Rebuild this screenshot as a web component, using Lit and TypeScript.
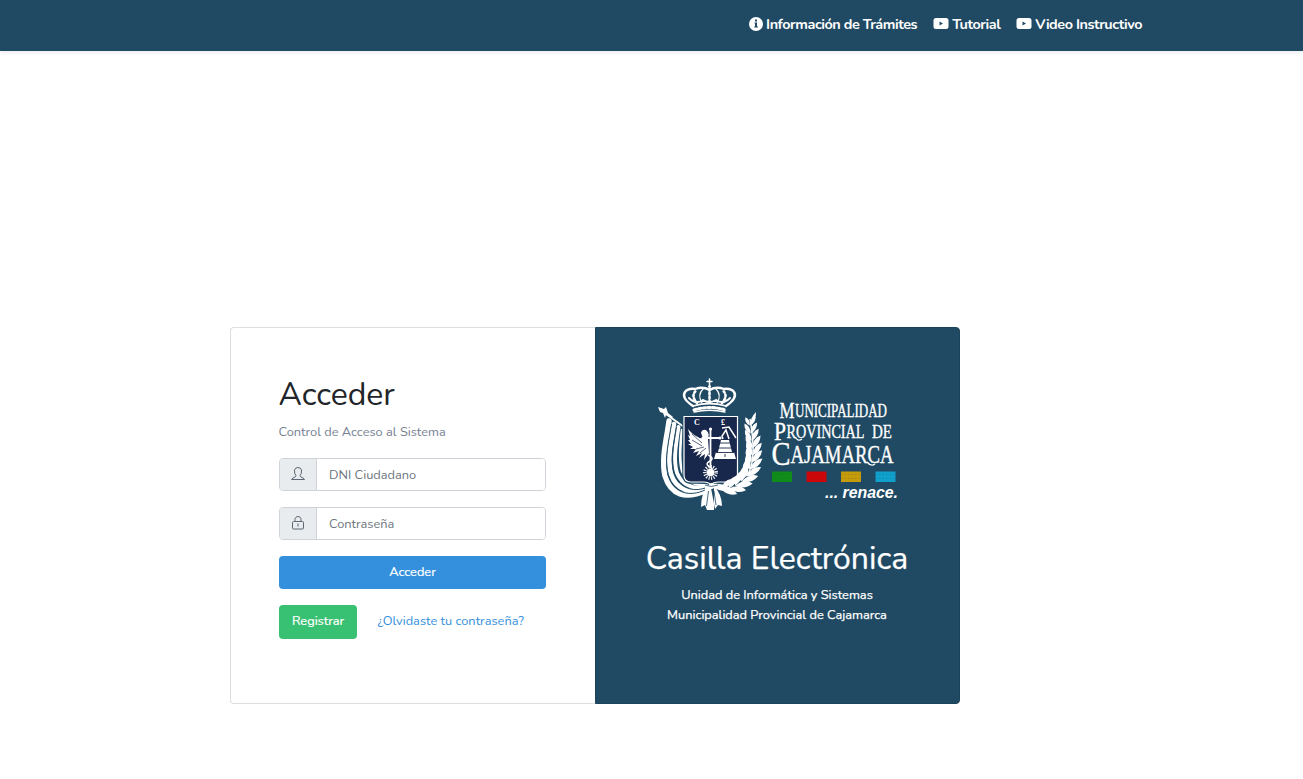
import { LitElement, html, css, svg } from "lit";
import { customElement } from "lit/decorators.js";

// stem position, rotation and size of each pair of laurel leaves
const leaves = [
  [93, 44, 3, 0.9], [93.5, 51, 0, 1.1], [94.5, 58, 0, 1.2], [95.5, 65, 2, 1.3], [96, 72, 5, 1.35],
  [95.5, 79, 10, 1.4], [94.5, 86, 18, 1.45], [92, 93, 28, 1.5], [88.5, 99, 40, 1.5], [83, 104, 52, 1.5],
  [77, 108, 64, 1.5], [70, 110, 76, 1.4],
];

@customElement("city-seal")
export class CitySeal extends LitElement {
  static styles = css`
    :host { display: block; width: 242px; height: 134px; }
    svg { display: block; overflow: visible; }
  `;
  render() {
    return html`<svg width="242" height="134" viewBox="0 0 242 134" role="img" aria-label="Municipalidad Provincial de Cajamarca">
      <g fill="none" stroke="#fff" stroke-linecap="round">
        <path d="M52.500 1v8M50 3.500h5" stroke-width="1.500"/>
        <circle cx="52.500" cy="8.500" r="1.500" fill="#fff" stroke="none"/>
        <path d="M36 28Q24 20 28 14Q31 10 38 11Q46 8 52.500 12Q59 8 67 11Q74 10 77 14Q81 20 69 28" stroke-width="2.400"/>
        <path d="M40 25Q33 17 40 12M65 25Q72 17 65 12M52.500 11v14" stroke-width="2.600" stroke-dasharray="1.600 2.200"/>
        <path d="M45 25Q40 17 46 11M60 25Q65 17 59 11" stroke-width="1.200"/>
        <path d="M32 20Q39 27 46 22Q52 26 59 22Q66 27 73 20" stroke-width="2"/>
        <path d="M36 28Q52.500 23 69 28" stroke-width="1.800"/>
        <path d="M37 32Q52.500 27 68 32" stroke-width="3" stroke-dasharray="2.500 2.200"/>
        <path d="M37 34Q52.500 30.500 68 34" stroke-width="1.300"/>
      </g>
      <path d="M1 29l6 2 2-2 2 6 5 4-1 1-6-3-1 3-2-5-3-1z" fill="#fff"/>
      <path d="M9 36L27 49" stroke="#fff" stroke-width="1.800"/>
      <g fill="none" stroke="#fff" stroke-linecap="round">
        <path d="M12 43C10 60 4 80 8 98C14 117 28 122 50 112" stroke-width="5.400"/>
        <path d="M17 46C14 65 10 80 14 96C19 112 34 117 50 110" stroke-width="4.600"/>
        <path d="M21.500 49C19 66 16 82 20 95C25 107 36 112 50 108.500" stroke-width="3.900"/>
        <path d="M25 52C23 68 22 83 25 93C29 103 38 108 50 107" stroke-width="2.600"/>
      </g>
      <path d="M14.500 46C12 63 7 80 11 97C17 116 33 119 48 112M19.500 49C17 66 13 80 17 95C23 111 36 114 48 110" fill="none" stroke="#204a64" stroke-width="1"/>
      <path d="M27 38.500H80.500V97Q80.500 104 73.500 104H62Q56 104 54 107Q52 104 46 104H34Q27 104 27 97z" fill="#18274c" stroke="#204a64" stroke-width="3.500"/>
      <path d="M27 38.500H80.500V97Q80.500 104 73.500 104H62Q56 104 54 107Q52 104 46 104H34Q27 104 27 97z" fill="#18274c" stroke="#fff" stroke-width="1.200"/>
      <g fill="#fff" stroke="#fff">
        <path d="M51 61Q53 55 49 52Q45 51 44 55L46 60Q43 61 41 59Q36 57 31 51L33 58 31 57 33 62 31 62 34 66 31 66 36 69 33 71 39 71 36 75 42 73 39 78 45 75 42 80 48 76 47 82 52 75z" stroke="none"/>
        <path d="M35 56L45 65M35 62L45 68M39 71L47 69M43 75L49 70" stroke="#18274c" stroke-width=".7"/>
        <path d="M53.500 51V90M46 60H63" fill="none" stroke-width="1.800"/>
        <circle cx="53.500" cy="51" r="1.600" stroke="none"/><circle cx="46" cy="60" r="1.600" stroke="none"/><circle cx="63" cy="60" r="1.600" stroke="none"/>
        <path d="M51 77Q58 80 53 83Q47 86 53 89Q57 91 52 93" fill="none" stroke-width="1.500"/>
        <path d="M64 62H72L75 74H77L79 81H57L59 74H61z" stroke="none"/>
        <path d="M63 65h10M61 70h13M59 74.500h18M68 76v3" stroke="#18274c" stroke-width=".9"/>
        <path d="M66 61L65 58 69 52 72 61M65 50L72 49 79 60" fill="none" stroke-width="1.500"/>
        <circle cx="53.500" cy="94.500" r="3.800" stroke="none"/>
        <circle cx="53.500" cy="94.500" r="5.600" fill="none" stroke-width="3.600" stroke-dasharray="1 1.350"/>
      </g>
      <path d="M93 41C96 58 99 80 92 94Q80 109 55 108" fill="none" stroke="#fff" stroke-width="1.500"/>
      <g fill="#fff">
        ${leaves.map(([x, y, a, s]) => svg`<g transform=${`translate(${x} ${y}) rotate(${a}) scale(${s})`}>
          <path d="M0 4Q-6 2-5.500-5Q0-3 0 4z"/><path d="M0 4Q6 1 6-6Q0-4 0 4z"/></g>`)}
        <path d="M95 46Q92 41 99 34Q99 42 95 46z"/>
        <path d="M54 106Q68 104 77 113Q63 115 54 108z"/>
        <path d="M52 107Q44 114 44 129L48 127 50 132 54 111zM54 109L50 132 57 132 57 110zM56 107Q65 116 65 128L61 127 58 131 54 110z"/>
        <circle cx="54.500" cy="108" r="3"/>
      </g>
      <path d="M51.500 113l-2 15M57 113l2 14M48 107Q54 110 61 107" stroke="#204a64" stroke-width=".8" fill="none"/>
      <g font-family="Liberation Serif, serif" fill="#fff" font-weight="bold" font-size="8"><text x="37" y="47">C</text><text x="64" y="47">£</text></g>
      <g font-family="Liberation Serif, serif" fill="#fff" stroke="#fff" stroke-width=".35">
        <text x="122.500" y="40" font-size="23" textLength="15" lengthAdjust="spacingAndGlyphs">M</text>
        <text x="138" y="38.500" font-size="18.500" textLength="92" lengthAdjust="spacingAndGlyphs">UNICIPALIDAD</text>
        <text x="117" y="62" font-size="25" textLength="12" lengthAdjust="spacingAndGlyphs">P</text>
        <text x="129.500" y="59.500" font-size="19.500" textLength="78" lengthAdjust="spacingAndGlyphs">ROVINCIAL</text>
        <text x="215" y="59.500" font-size="19.500" textLength="20" lengthAdjust="spacingAndGlyphs">DE</text>
        <text x="114.500" y="87" font-size="33" textLength="19" lengthAdjust="spacingAndGlyphs">C</text>
        <text x="133.500" y="84.500" font-size="24.500" textLength="103" lengthAdjust="spacingAndGlyphs">AJAMARCA</text>
      </g>
      <path d="M138 59q3 5 7 2M210 84q4 5 8 2" fill="none" stroke="#fff" stroke-width="1.300"/>
      <path d="M115 93.500h20v10.500h-20z" fill="#108c18"/><path d="M149.500 93.500h20v10.500h-20z" fill="#d00508"/><path d="M184 93.500h20v10.500h-20z" fill="#c69b0a"/><path d="M218.500 93.500h20v10.500h-20z" fill="#10a0cc"/>
      <path d="M115 96.500h20m14.500 0h20m14.500 0h20m14.500 0h20M115 100.500h20m14.500 0h20m14.500 0h20m14.500 0h20" stroke="#204a64" stroke-opacity=".3" stroke-width=".8" stroke-dasharray="1.500 2"/>
      <text x="168" y="119.500" fill="#fff" font-family="Liberation Sans, sans-serif" font-style="italic" font-weight="bold" font-size="16" textLength="73" lengthAdjust="spacingAndGlyphs">... renace.</text>
    </svg>`;
  }
}

@customElement("app-root")
export class AppRoot extends LitElement {
  static styles = css`
    :host { display: block; height: 779px; background: #fff; overflow: hidden; font: 12.8px/20px Nunito, "Open Sans", sans-serif; color: #212529; }
    * { box-sizing: border-box; }
    nav { height: 51px; background: #204a64; box-shadow: 0 2px 4px rgba(0,0,0,.08); display: flex; justify-content: flex-end; gap: 16px; padding: 14px 161px 0 0; }
    nav a { display: flex; gap: 3px; color: #fff; font-size: 14.4px; font-weight: 700; letter-spacing: -.44px; white-space: nowrap; }
    nav svg { margin-top: 3px; }
    .card { margin: 276px 0 0 230px; width: 730px; height: 377px; display: flex; }
    .login { width: 365px; padding: 48px 49px 0 48px; border: 1px solid #dcdfe2; border-right: 0; border-radius: 4px 0 0 4px; }
    .brand { width: 365px; padding: 50px 1px 0 0; background: #204a64; color: #fff; border-radius: 0 4px 4px 0; display: flex; flex-direction: column; align-items: center; border: 1px solid #1d435b; }
    city-seal { margin-left: 2px; }
    h1, h2, p { margin: 0; font-weight: 400; white-space: nowrap; }
    h1 { font-size: 32px; line-height: 38px; margin-left: -.5px; }
    .sub { margin-top: 8px; color: #768192; margin-left: -.5px; }
    .field { display: flex; height: 33px; margin-top: 16px; border: 1px solid #ced4da; border-radius: 4px; overflow: hidden; }
    .icon { width: 37px; background: #e9ecef; border-right: 1px solid #ced4da; display: flex; justify-content: center; padding-top: 8px; }
    .field input { flex: 1; min-width: 0; border: 0; padding: 0 12px; font: inherit; background: #fff; }
    .field input::placeholder { color: #6c757d; opacity: 1; }
    button { font: inherit; color: #fff; border: 0; border-radius: 4px; padding: 0 0 2px; }
    .enter { display: block; width: 267px; height: 33px; margin-top: 16px; background: #3490dc; -webkit-text-stroke: .2px #fff; }
    .row { display: flex; margin-top: 16px; gap: 20.500px; }
    .register { width: 78px; height: 34px; background: #38c172; -webkit-text-stroke: .2px #fff; }
    .forgot { color: #3490dc; padding-top: 6px; white-space: nowrap; }
    h2 { font-size: 32px; line-height: 38px; margin-top: 28px; -webkit-text-stroke: .25px #fff; }
    .info { margin-top: 7px; text-align: center; -webkit-text-stroke: .25px #fff; }
  `;
  render() {
    const video = html`<svg width="16" height="13" viewBox="0 0 16 13"><rect x=".5" y="1" width="15" height="11" rx="2.500" fill="#fff"/><path d="M6.500 4.500v4l3.500-2z" fill="#204a64"/></svg>`;
    return html`
      <nav>
        <a><svg width="14" height="14" viewBox="0 0 14 14"><circle cx="7" cy="7" r="7" fill="#fff"/><path d="M6 2.500h2v2H6zM5.500 5.500H8v4h1v1H5.200v-1H6v-3h-.5z" fill="#204a64"/></svg><span>Información de Trámites</span></a>
        <a>${video}<span>Tutorial</span></a>
        <a>${video}<span>Video Instructivo</span></a>
      </nav>
      <main class="card">
        <section class="login">
          <h1>Acceder</h1>
          <p class="sub">Control de Acceso al Sistema</p>
          <div class="field"><span class="icon"><svg width="14" height="14" viewBox="0 0 14 14" fill="none" stroke="#5c6873"><path d="M5 8.500Q3 6.500 3.500 3Q4.200.5 7 .5Q9.800.5 10.500 3Q11 6.500 9 8.500Q9 10 12 11Q13.500 12 13.500 12.500H.5Q.5 12 2 11Q5 10 5 8.500z"/></svg></span><input placeholder="DNI Ciudadano"></div>
          <div class="field"><span class="icon"><svg width="14" height="14" viewBox="0 0 14 14" fill="none" stroke="#5c6873"><rect x="1.500" y="5.500" width="11" height="7.500" rx="1"/><path d="M4 5.500V3.500C4 -.5 10 -.5 10 3.500V5.500M7 7.500V10.500"/></svg></span><input type="password" placeholder="Contraseña"></div>
          <button class="enter">Acceder</button>
          <div class="row"><button class="register">Registrar</button><a class="forgot">¿Olvidaste tu contraseña?</a></div>
        </section>
        <section class="brand">
          <city-seal></city-seal>
          <h2>Casilla Electrónica</h2>
          <p class="info">Unidad de Informática y Sistemas<br>Municipalidad Provincial de Cajamarca</p>
        </section>
      </main>`;
  }
}
